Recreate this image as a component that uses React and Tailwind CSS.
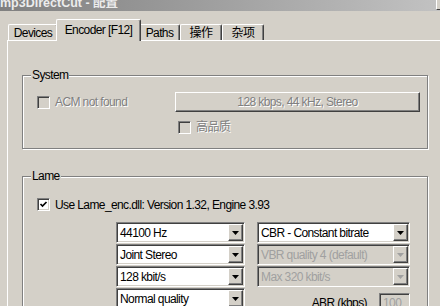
import React from 'react';

const sunken =
  'border border-t-[#808080] border-l-[#808080] border-b-white border-r-white shadow-[inset_1px_1px_0_#404040,inset_-1px_-1px_0_#d4d0c8]';
const raised =
  'border border-t-white border-l-white border-b-[#404040] border-r-[#404040] shadow-[inset_-1px_-1px_0_#808080]';
const grayText = 'text-[#808080] [text-shadow:1px_1px_0_#ffffff]';

function Checkbox({ checked, disabled }) {
  return (
    <div
      className={`w-[13px] h-[13px] shrink-0 flex items-center justify-center ${sunken} ${
        disabled ? 'bg-[#d4d0c8]' : 'bg-white'
      }`}
    >
      {checked && (
        <svg width="9" height="9" viewBox="0 0 9 9">
          <path d="M1.5 4 L3.5 6 L7.5 2" fill="none" stroke="#000" strokeWidth="1.7" />
        </svg>
      )}
    </div>
  );
}

function Combo({ value, disabled }) {
  return (
    <div className={`h-[21px] flex items-stretch p-[1px] ${sunken} ${disabled ? 'bg-[#d4d0c8]' : 'bg-white'}`}>
      <div
        className={`flex-1 flex items-center pl-[2px] whitespace-nowrap overflow-hidden ${
          disabled ? 'text-[#a0a0a0]' : 'text-black'
        }`}
      >
        {value}
      </div>
      <div className={`w-[15px] bg-[#d4d0c8] flex items-center justify-center ${raised}`}>
        <svg width="7" height="4" viewBox="0 0 7 4">
          <path d="M0 0 H7 L3.5 4 Z" fill={disabled ? '#a0a0a0' : '#000'} />
        </svg>
      </div>
    </div>
  );
}

function Group({ label, className, children }) {
  return (
    <div
      className={`relative w-[406px] border border-[#808080] shadow-[inset_1px_1px_0_#fff,1px_1px_0_#fff] ${className}`}
    >
      <div className="absolute left-[8px] -top-[8px] px-[1px] bg-[#d4d0c8] leading-[14px]">{label}</div>
      {children}
    </div>
  );
}

function Tab({ label, selected, w }) {
  return (
    <div
      className={`flex items-center justify-center rounded-t-[2px] border-t border-l border-r border-t-white border-l-white border-r-[#404040] shadow-[inset_-1px_0_0_#808080] bg-[#d4d0c8] whitespace-nowrap ${
        selected ? 'relative z-10 h-[22px] -mb-[1px] -mx-[2px] pb-[1px]' : 'h-[16px]'
      }`}
      style={{ width: w }}
    >
      {label}
    </div>
  );
}

export default function App() {
  return (
    <div
      className="w-[440px] h-[306px] overflow-hidden bg-[#d4d0c8] text-black text-[12px] tracking-[-0.6px] leading-[14px]"
      style={{ fontFamily: '"Liberation Sans", "Noto Sans CJK SC", sans-serif' }}
    >
      <div className="relative h-[11px] overflow-hidden bg-gradient-to-r from-[#808080] to-[#c2c2c2]">
        <div className="-mt-[3px] whitespace-nowrap text-[12.5px] leading-[12px] font-bold tracking-normal text-[#ececec]">
          mp3DirectCut - 配置
        </div>
        <div className="absolute right-0 top-0 w-[4px] h-[10px] bg-[#d4d0c8] border-l border-b border-l-white border-b-[#404040]" />
      </div>

      <div className="h-[29px] flex items-end pl-[8px]">
        <Tab label="Devices" w={50} />
        <Tab label="Encoder [F12]" w={85} selected />
        <Tab label="Paths" w={41} />
        <Tab label="操作" w={42} />
        <Tab label="杂项" w={42} />
      </div>

      <div className="ml-[7px] h-[300px] border-l border-t border-white pl-[14px] pt-[34px]">
        <Group label="System" className="h-[74px]">
          <div className="pl-[14px] pt-[16px]">
            <div className="flex items-center h-[20px]">
              <div className="w-[138px] flex items-center gap-[5px]">
                <Checkbox disabled />
                <span className={grayText}>ACM not found</span>
              </div>
              <div className={`w-[245px] h-[20px] flex items-center justify-center ${raised} ${grayText}`}>
                128 kbps, 44 kHz, Stereo
              </div>
            </div>
            <div className="mt-[8px] pl-[141px] flex items-center gap-[5px]">
              <Checkbox disabled />
              <span className={grayText}>高品质</span>
            </div>
          </div>
        </Group>

        <Group label="Lame" className="mt-[27px] h-[200px]">
          <div className="pl-[14px] pt-[21px]">
            <div className="flex items-center gap-[5px] h-[13px]">
              <Checkbox checked />
              <span className="whitespace-nowrap">Use Lame_enc.dll: Version 1.32, Engine 3.93</span>
            </div>
            <div className="mt-[11px] pl-[79px] grid grid-cols-[129px_153px] gap-x-[12px] gap-y-[1px]">
              <Combo value="44100 Hz" />
              <Combo value="CBR - Constant bitrate" />
              <Combo value="Joint Stereo" />
              <Combo value="VBR quality 4 (default)" disabled />
              <Combo value="128 kbit/s" />
              <Combo value="Max 320 kbit/s" disabled />
              <Combo value="Normal quality" />
              <div className="flex justify-end items-start gap-[12px] pt-[5px]">
                <span className="pt-[3px] whitespace-nowrap">ABR (kbps)</span>
                <div className={`w-[31px] h-[20px] pl-[3px] flex items-center text-[#a0a0a0] ${sunken} bg-[#d4d0c8]`}>
                  100
                </div>
              </div>
            </div>
          </div>
        </Group>
      </div>
    </div>
  );
}
